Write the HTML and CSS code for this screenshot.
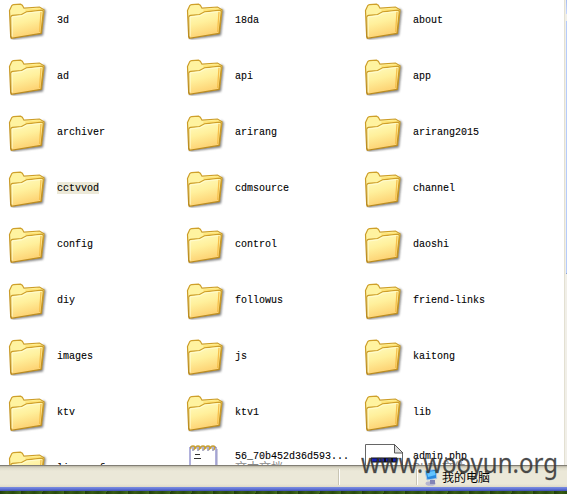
FILE: index.html
```
<!DOCTYPE html>
<html lang="zh">
<head>
<meta charset="utf-8">
<title>我的电脑</title>
<link rel="stylesheet" href="styles.css">
</head>
<body>
<svg class="defs" width="0" height="0" aria-hidden="true">
  <defs>
    <linearGradient id="front" x1="0" y1="0" x2=".3" y2="1">
      <stop offset="0" stop-color="#fffdc4"/><stop offset=".5" stop-color="#fff09c"/><stop offset="1" stop-color="#fdd070"/>
    </linearGradient>
    <linearGradient id="edge" x1="0" y1="0" x2="0" y2="1">
      <stop offset="0" stop-color="#cfa02a"/><stop offset="1" stop-color="#b98a20"/>
    </linearGradient>
    <filter id="soft" x="-20%" y="-20%" width="140%" height="140%"><feGaussianBlur stdDeviation=".8"/></filter>
    <symbol id="folder" viewBox="0 0 40 40">
      <path d="M4 39.5 35 35.5 37.800 10.5 35 8 33 32 4 36z" fill="#555" opacity=".75" filter="url(#soft)"/>
      <path d="M1.500 10.500 3.800 5.600Q4.400 4.700 5.500 4.600L12.500 4.200 14.300 5.200 16 8.200 31.500 7 36 9.800 33.500 33 2.700 37z" fill="#fff3a0" stroke="url(#edge)" stroke-width="1.2"/>
      <path d="M17 9.500 31 8.300 34 10 18 12z" fill="#ffe477"/>
      <path d="M2.800 17Q2.900 15.700 4.500 15.300L13.500 14.500 18.500 11.800 34 10.200 35.300 11.200 33 33.400 3.300 38.400z" fill="url(#front)" stroke="url(#edge)" stroke-width="1.2"/>
      <path d="M4.100 36.500V17L14 15.800 19 13 32 11.700" fill="none" stroke="#fffcd0"/>
      <path d="M33 12 31.600 32" fill="none" stroke="#f6c04c" stroke-width="1.300"/>
    </symbol>
  </defs>
</svg>
<div class="window">
  <main class="files" id="files"></main>
  <div class="scrollbar"><i class="thumb up"></i><i class="gap"></i><i class="thumb track"></i></div>
</div>
<footer class="status">
  <span class="pane first"></span>
  <span class="pane second"></span>
  <span class="pane computer">
    <svg width="18" height="19" viewBox="0 0 18 19">
      <ellipse cx="6.500" cy="15.5" rx="5" ry="2.300" fill="#b5b5cf"/>
      <path d="M6 12h5v4H6z" fill="#8284b5"/>
      <path d="M1 2.8 12 1.2 12.800 10.5 3 12z" fill="#288bdf" stroke="#abc9e7"/>
      <path d="M3 4 11 3 11.500 7 4 9z" fill="#62c5ff"/>
    </svg>
    <span>我的电脑</span>
  </span>
</footer>
<div class="frame"></div>
<div class="desktop"></div>
<svg class="watermark" width="206" height="42"><text x="0" y="23" textLength="197" lengthAdjust="spacingAndGlyphs">www.wooyun.org</text></svg>
<script src="files.js"></script>
</body>
</html>
```
FILE: styles.css
```
body {
  margin: 0;
  width: 567px;
  height: 494px;
  overflow: hidden;
  position: relative;
  background: #fff;
  font-family: "Liberation Mono", "Noto Sans CJK SC", monospace;
  font-size: 10px;
  color: #000;
}
.defs { position: absolute; }
.window {
  display: flex;
  height: 465px;
  overflow: hidden;
}
.files {
  flex: 1;
  display: grid;
  grid-template-columns: repeat(3, 178px);
  grid-auto-rows: 56px;
  align-content: start;
  margin-top: -8px;
}
.tile {
  display: flex;
  align-items: center;
  padding-left: 8px;
}
.icon {
  width: 40px;
  height: 40px;
  margin-right: 9px;
  flex: none;
}
.name {
  line-height: 14px;
  height: 12px;
  white-space: pre;
  -webkit-text-stroke: .1px #000;
}
.selected .name { background: #ece9d8; }
.type {
  display: block;
  font-size: 12px;
  line-height: 12px;
  color: #888;
}
.doc { align-items: flex-start; padding-top: 10px; }
.doc .icon { margin-top: -7px; }
.doc .name { height: auto; line-height: 13px; }
.doc .type { -webkit-text-stroke: 0; }
.scrollbar {
  width: 3px;
  flex: none;
  display: flex;
  flex-direction: column;
  border-left: 1px solid #e3e0d2;
  box-sizing: border-box;
  background: #f1efe8;
}
.thumb {
  margin-left: 1px;
  background: #b5cbfb;
}
.up { height: 14px; background: linear-gradient(#a7bdf0, #c6d7ff); }
.gap { height: 7px; }
.track { height: 252px; border-bottom: 1px solid #8ca4d4; }
.status {
  display: flex;
  height: 22px;
  box-sizing: border-box;
  border-top: 1px solid #817e75;
  background: linear-gradient(#b9b5a5, #dedbca 2px, #ebe8d8 5px, #ebe8d8 18px, #dedac9);
}
.pane {
  box-sizing: border-box;
  margin: 3px 0 2px;
  border-right: 1px solid #fff;
  box-shadow: inset -1px 0 #c9c5b3;
}
.first { width: 340px; }
.second { width: 78px; }
.computer {
  flex: 1;
  display: flex;
  align-items: center;
  border: 0;
  box-shadow: none;
  padding-left: 6px;
  font: 12px/16px "Noto Sans CJK SC", sans-serif;
}
.frame {
  height: 4px;
  background: linear-gradient(#7b8fe0, #6577d8 45%, #4051b5);
}
.desktop {
  height: 3px;
  background: repeating-linear-gradient(100deg, #203e0c 0, #365b14 7px, #284b0e 13px, #40691c 21px);
}
.watermark {
  position: absolute;
  left: 361px;
  top: 450px;
  font-family: "Noto Sans", sans-serif;
  font-size: 27px;
  fill: #343434;
  fill-opacity: .88;
  stroke: #343434;
  stroke-opacity: .5;
  stroke-width: .3px;
}
```
FILE: files.js
```
const names = ["3d", "18da", "about", "ad", "api", "app", "archiver", "arirang", "arirang2015",
  "cctvvod", "cdmsource", "channel", "config", "control", "daoshi", "diy", "followus", "friend-links",
  "images", "js", "kaitong", "ktv", "ktv1", "lib", "liuyuanf"];

const notepad = `<svg class="icon" viewBox="0 0 40 40">
  <path d="M4 4h26v36H4z" fill="#fff" stroke="#6262b8"/><path d="M31 6v34" stroke="#9999c4"/>
  <path d="M5 6q-1-3 2-3t1 4m2-1q-1-3 2-3t1 4m2-1q-1-3 2-3t1 4m2-1q-1-3 2-3t1 4m2-1q-1-3 2-3t1 4" fill="none" stroke="#c9a12e" stroke-width="1.3"/>
  <path d="M7 5v3m5-3v3m5-3v3m5-3v3m5-3v3" stroke="#666690"/>
  <path d="M9 11.5h5M8 15.5h7" stroke="#333"/></svg>`;

const script = `<svg class="icon" viewBox="0 0 40 40">
  <path d="M1.500 40V1.500H30.500l8 8V40" fill="#fff" stroke="#666"/>
  <path d="M30.500 1.500v8.500H39z" fill="#ddd" stroke="#555"/>
  <path d="M7 14.500h26v5H7z" fill="#111"/>
  <path d="M8 17h24" stroke="#1620b8" stroke-width="3" stroke-dasharray="5 2"/></svg>`;

const tile = name => `<div class="tile${name === "cctvvod" ? " selected" : ""}">
  <svg class="icon"><use href="#folder"/></svg><span class="name">${name}</span></div>`;

const doc = (icon, name, type) =>
  `<div class="tile doc">${icon}<span class="name">${name}<span class="type">${type}</span></span></div>`;

document.getElementById("files").innerHTML = names.map(tile).join("") +
  doc(notepad, "56_70b452d36d593...", "文本文档") + doc(script, "admin.php", "PHP 文件");
```
